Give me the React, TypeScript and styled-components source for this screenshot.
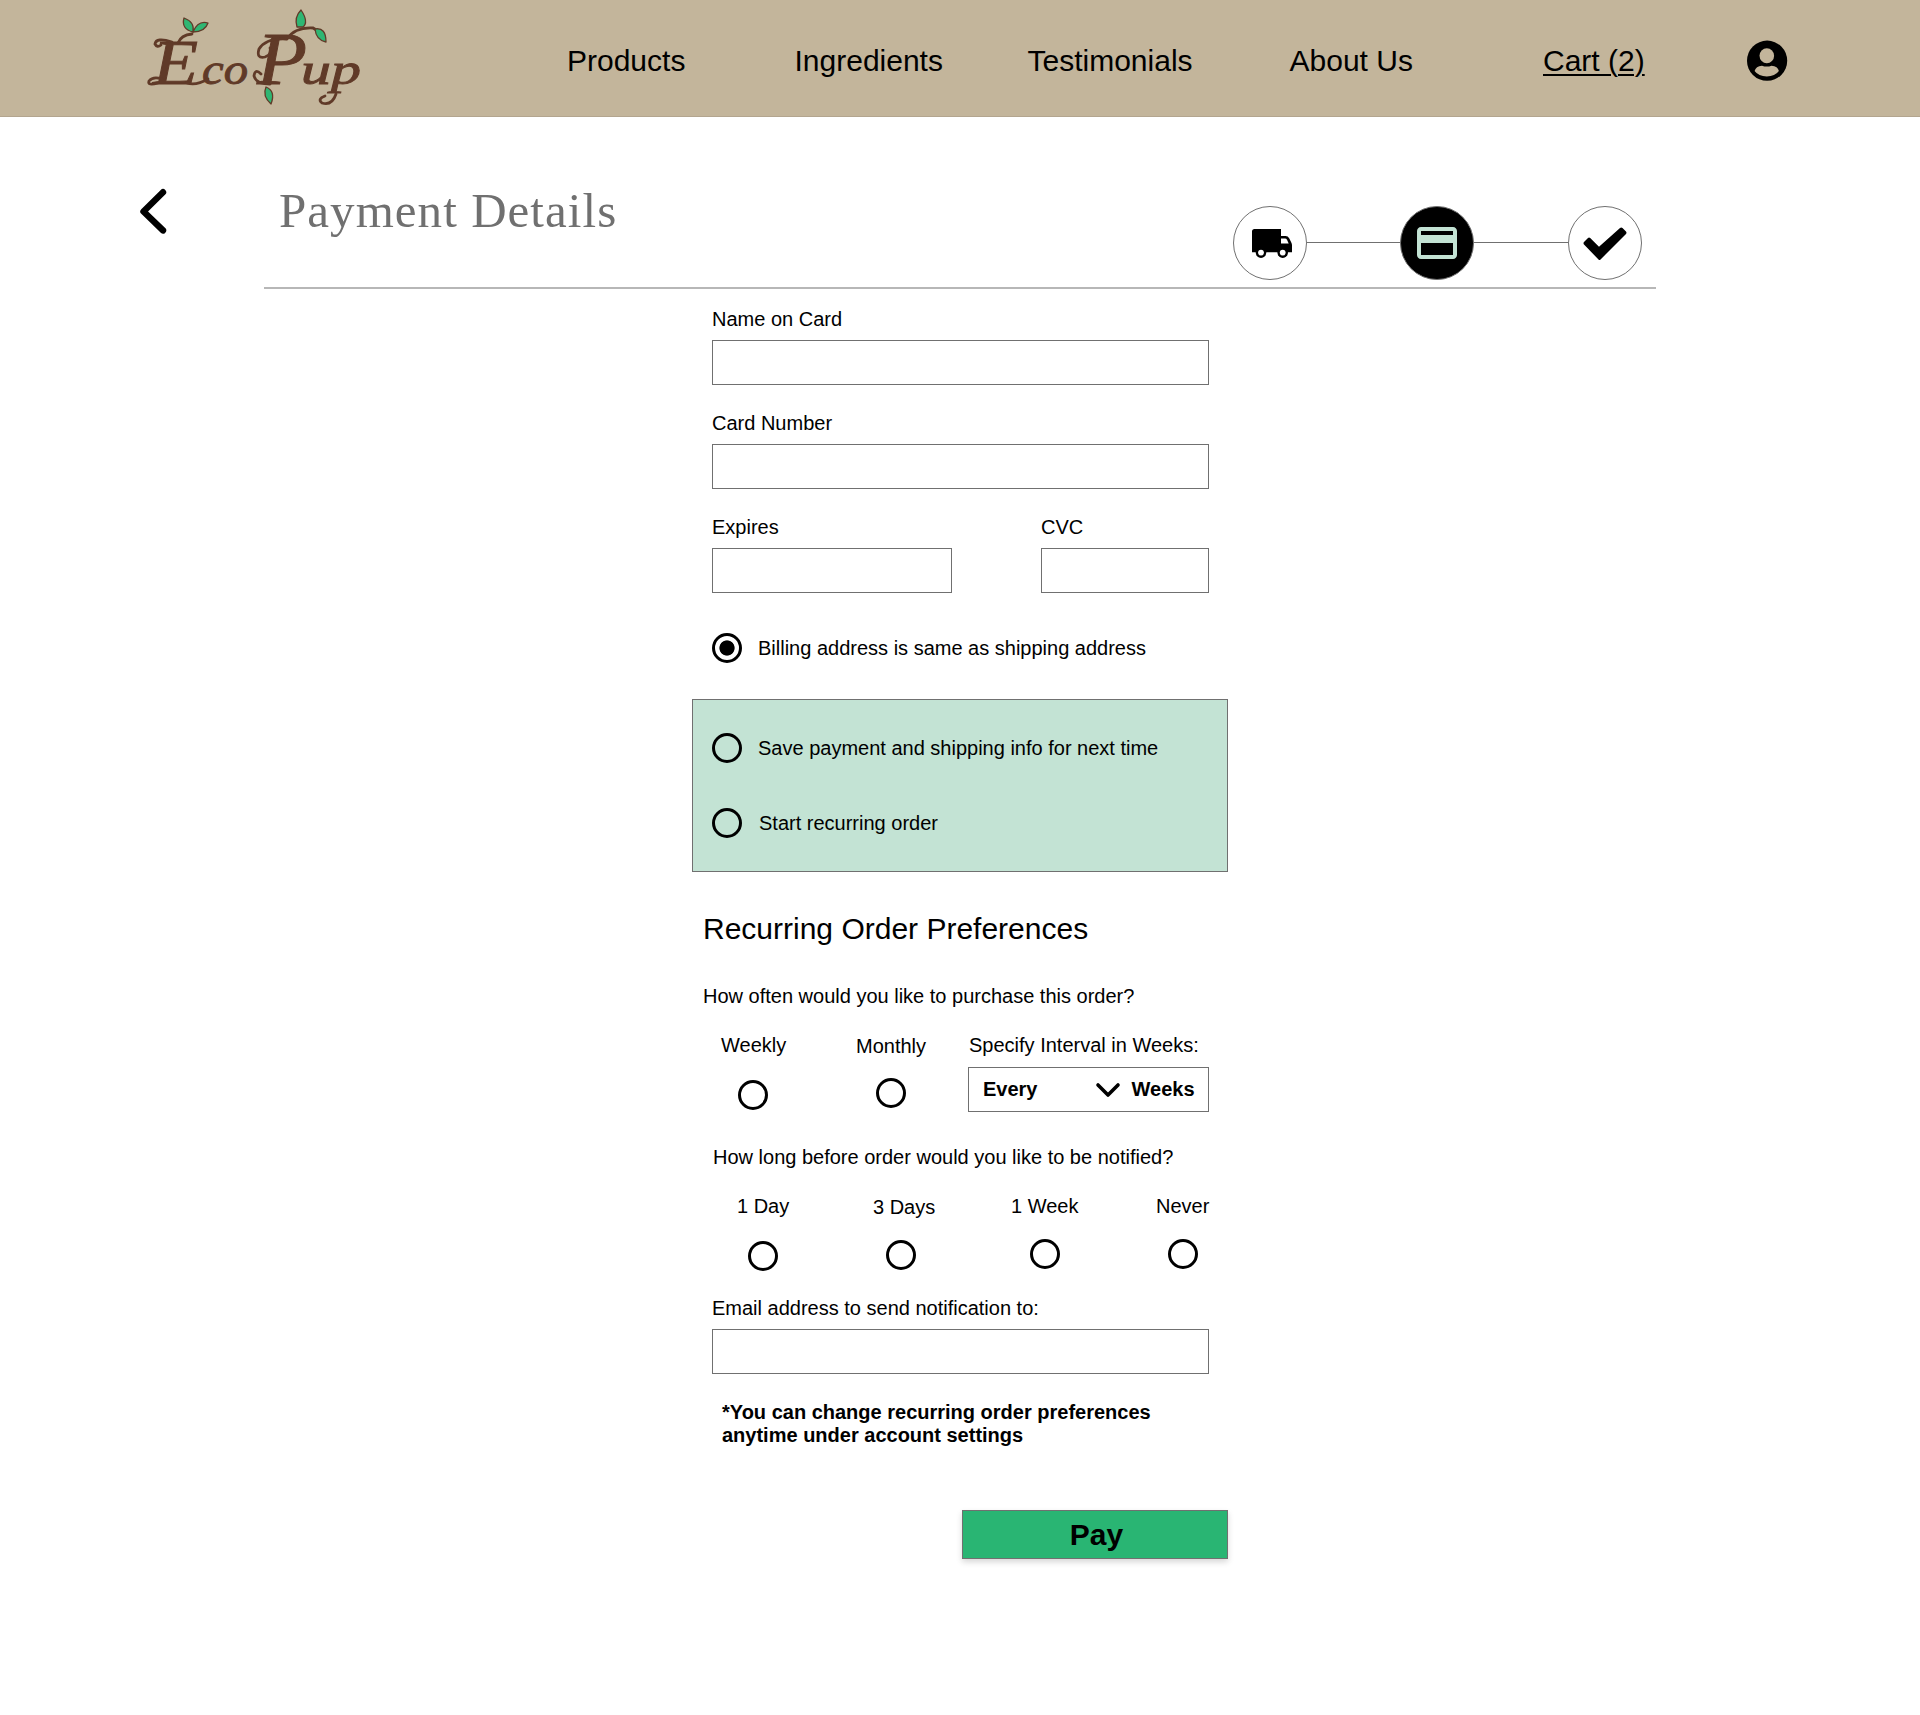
import React, { useState } from 'react';
import styled, { createGlobalStyle } from 'styled-components';
import { MdPayment } from 'react-icons/md';

const GlobalStyle = createGlobalStyle`
  *, *::before, *::after { box-sizing: border-box; }
  body {
    margin: 0;
    background: #fff;
    color: #000;
    font-family: "Liberation Sans", Arial, sans-serif;
    font-size: 20px;
    line-height: 23px;
  }
`;

const Page = styled.div`
  width: 1920px;
  height: 1715px;
`;

const Header = styled.header`
  display: flex;
  align-items: flex-start;
  height: 117px;
  padding-left: 140px;
  background: #c3b59b;
  border-bottom: 1px solid #b3a58f;
`;

const Logo = styled.svg`
  flex: none;
  width: 240px;
  height: 116px;
`;

const Nav = styled.nav`
  display: flex;
  padding: 43px 0 0 187px;
`;

const NavLink = styled.a<{ $width: number; $current?: boolean }>`
  width: ${(p) => p.$width}px;
  font-size: 30px;
  line-height: 36px;
  white-space: nowrap;
  color: #000;
  span {
    text-decoration: ${(p) => (p.$current ? 'underline' : 'none')};
    text-decoration-thickness: 2px;
    text-underline-offset: 3px;
  }
`;

const Account = styled.svg`
  width: 41px;
  height: 41px;
  margin-top: 40px;
`;

const TitleBar = styled.section`
  display: flex;
  height: 172px;
  padding-left: 138px;
`;

const Back = styled.svg`
  width: 30px;
  height: 48px;
  margin-top: 70px;
`;

const TitleRow = styled.div`
  display: flex;
  justify-content: space-between;
  width: 1392px;
  margin-left: 96px;
  padding: 0 14px 0 15px;
  border-bottom: 2px solid #b7b7b7;
`;

const Title = styled.h1`
  margin: 65px 0 0;
  font: 400 49px/58px Baskerville, "Liberation Serif", serif;
  letter-spacing: 1.05px;
  color: #707070;
`;

const Steps = styled.div`
  display: flex;
  align-items: center;
  height: 74px;
  margin-top: 89px;
`;

const Step = styled.div<{ $active?: boolean; $shift?: number }>`
  display: flex;
  align-items: center;
  justify-content: center;
  width: 74px;
  height: 74px;
  padding-left: ${(p) => p.$shift ?? 0}px;
  border: 1px solid #707070;
  border-radius: 50%;
  background: ${(p) => (p.$active ? '#000' : '#fff')};
  color: ${(p) => (p.$active ? '#c3e3d4' : '#000')};
`;

const StepLine = styled.div<{ $width: number }>`
  width: ${(p) => p.$width}px;
  height: 1px;
  margin-bottom: 1px;
  background: #707070;
`;

const Form = styled.form`
  display: flex;
  flex-direction: column;
  width: 536px;
  margin: 19px 0 0 692px;
`;

const FieldRow = styled.div`
  display: flex;
  justify-content: space-between;
  width: 497px;
  margin: 0 0 27px 20px;
`;

const Field = styled.label<{ $width: number }>`
  display: flex;
  flex-direction: column;
  gap: 9px;
  width: ${(p) => p.$width}px;
`;

const Input = styled.input`
  width: 100%;
  height: 45px;
  padding: 0 12px;
  border: 1px solid #707070;
  border-radius: 0;
  background: #fff;
  font: inherit;
`;

const Radio = styled.input.attrs({ type: 'radio' })`
  appearance: none;
  flex: none;
  width: 30px;
  height: 30px;
  margin: 0;
  border: 3px solid #000;
  border-radius: 50%;
  &:checked {
    background: radial-gradient(circle, #000 7.2px, transparent 8px);
  }
`;

const Choice = styled.label<{ $gap?: number }>`
  display: flex;
  align-items: center;
  gap: ${(p) => p.$gap ?? 16}px;
  height: 30px;
`;

const Billing = styled.div`
  margin: 13px 0 36px 20px;
`;

const SavePanel = styled.div`
  display: flex;
  flex-direction: column;
  gap: 45px;
  height: 173px;
  padding: 33px 0 0 19px;
  border: 1px solid #707070;
  background: #c3e3d4;
`;

const SectionTitle = styled.h2`
  margin: 39px 0 0 11px;
  font-size: 30px;
  line-height: 36px;
  font-weight: 400;
`;

const Question = styled.p<{ $top: number; $left: number }>`
  margin: ${(p) => p.$top}px 0 0 ${(p) => p.$left}px;
`;

const Options = styled.div<{ $top: number; $left: number }>`
  display: flex;
  align-items: flex-start;
  margin: ${(p) => p.$top}px 0 0 ${(p) => p.$left}px;
`;

const Option = styled.label<{ $advance: number; $drop?: number; $gap: number; $indent: number }>`
  display: flex;
  flex-direction: column;
  gap: ${(p) => p.$gap}px;
  width: ${(p) => p.$advance}px;
  padding-top: ${(p) => p.$drop ?? 0}px;
  white-space: nowrap;
  input { margin-left: ${(p) => p.$indent}px; }
`;

const Interval = styled.div`
  display: flex;
  flex-direction: column;
  gap: 10px;
  width: 241px;
`;

const IntervalLabel = styled.span`
  padding-left: 1px;
`;

const Select = styled.button`
  display: flex;
  align-items: center;
  width: 241px;
  height: 45px;
  padding: 0 0 0 14px;
  border: 1px solid #707070;
  background: #fff;
  color: #000;
  font: bold 20px/23px "Liberation Sans", Arial, sans-serif;
`;

const Chevron = styled.svg`
  width: 26px;
  height: 18px;
  margin: 0 11px 0 57px;
`;

const EmailRow = styled(FieldRow)`
  margin-top: 26px;
`;

const Note = styled.p`
  width: 450px;
  margin: 0 0 0 30px;
  font-weight: bold;
`;

const PayButton = styled.button`
  align-self: flex-end;
  width: 266px;
  height: 49px;
  margin-top: 63px;
  padding: 0 0 0 3px;
  border: 1px solid #707070;
  background: #29b573;
  box-shadow: 0 3px 6px rgba(0, 0, 0, 0.16);
  color: #000;
  font: bold 30px/36px "Liberation Sans", Arial, sans-serif;
`;

const brown = '#603a28';

function Leaf({ d }: { d: string }) {
  return <path d={d} fill="#2fb673" stroke={brown} strokeWidth="1.3" strokeLinejoin="round" />;
}

function EcoPupLogo() {
  return (
    <Logo viewBox="140 0 240 116" aria-label="EcoPup">
      <g fontFamily="Liberation Serif, serif" fontStyle="italic" fill={brown} stroke={brown} strokeWidth="0.9">
        <text x="153" y="84" fontSize="64" textLength="45" lengthAdjust="spacingAndGlyphs">E</text>
        <text x="202" y="84" fontSize="44" textLength="46" lengthAdjust="spacingAndGlyphs">co</text>
        <text x="257" y="84" fontSize="74" textLength="50" lengthAdjust="spacingAndGlyphs">P</text>
        <text x="301" y="84" fontSize="44" textLength="60" lengthAdjust="spacingAndGlyphs">up</text>
      </g>
      {/* vines curling off the capitals */}
      <g fill="none" stroke={brown} strokeWidth="2.8" strokeLinecap="round">
        <path d="M178 43 Q181 35 192 34" />
        <path d="M172 42 Q156 37 155 44 Q157 48 161 45" />
        <path d="M158 83 Q147 86 149 81 Q153 76 162 79" />
        <path d="M187 83 Q196 86 208 79" />
        <path d="M287 39 Q295 27 313 28 L318 31" />
        <path d="M286 39 Q266 38 259 49 Q256 59 265 57 Q273 54 270 48" />
        <path d="M270 84 Q256 84 254 76 Q255 68 261 74" />
        <path d="M336 94 Q332 106 322 103 Q317 99 325 96" />
      </g>
      <Leaf d="M193 32 Q181 29 184 18 Q195 22 193 32Z" />
      <Leaf d="M193 32 Q198 20 208 23 Q205 32 193 32Z" />
      <Leaf d="M297 27 Q294 17 301 10 Q309 22 303 27Z" />
      <Leaf d="M315 29 Q326 27 326 42 Q316 40 315 29Z" />
      <Leaf d="M266 87 Q276 91 271 104 Q262 96 266 87Z" />
    </Logo>
  );
}

function Truck() {
  return (
    <svg width="40" height="29" viewBox="0 0 40 29">
      <path d="M2.5 0 H29 V7 H33.5 Q36 7 37.2 9.3 L39.4 13.8 Q40 15 40 16.2 V23.3 H0 V2.5 Q0 0 2.5 0Z" />
      <path d="M29 9.6 H33 Q34.4 9.6 35 10.8 L36.7 14.6 H29Z" fill="#fff" />
      <circle cx="9" cy="23.6" r="5.3" />
      <circle cx="30.7" cy="23.6" r="5.3" />
      <circle cx="9" cy="23.6" r="2.9" fill="#fff" />
      <circle cx="30.7" cy="23.6" r="2.9" fill="#fff" />
    </svg>
  );
}

export default function App() {
  const [same, setSame] = useState(true);
  return (
    <Page>
      <GlobalStyle />
      <Header>
        <EcoPupLogo />
        <Nav>
          <NavLink $width={227.5}><span>Products</span></NavLink>
          <NavLink $width={233}><span>Ingredients</span></NavLink>
          <NavLink $width={262}><span>Testimonials</span></NavLink>
          <NavLink $width={253.5}><span>About Us</span></NavLink>
          <NavLink $width={204} $current><span>Cart (2)</span></NavLink>
        </Nav>
        <Account viewBox="0 0 41 41">
          <circle cx="20.1" cy="20.7" r="20.1" />
          <ellipse cx="19.8" cy="15.7" rx="7.3" ry="7.5" fill="#c3b59b" />
          <path d="M7.6 31 Q8.8 26.2 15 25.7 Q19.8 27.4 24.6 25.7 Q30.8 26.2 31.9 31 Q28 36.4 19.8 36.5 Q11.6 36.4 7.6 31Z" fill="#c3b59b" />
        </Account>
      </Header>

      <TitleBar>
        <Back viewBox="0 0 30 48" fill="none" stroke="#000" strokeWidth="6.4" strokeLinecap="round" strokeLinejoin="round">
          <path d="M25 5.2 L5.5 24.5 L25 43.4" />
        </Back>
        <TitleRow>
          <Title>Payment Details</Title>
          <Steps>
            <Step $shift={4}><Truck /></Step>
            <StepLine $width={93} />
            <Step $active><MdPayment size={48} /></Step>
            <StepLine $width={94} />
            <Step>
              <svg width="44" height="34" viewBox="0 0 44 34">
                <path transform="translate(0 1)" d="M1 15 L5 11 Q6 10 7.2 11 L16 19.8 L37 1 Q38.3 0 39.5 1 L43 4.5 Q44 5.8 43 7 L17.5 32.5 Q16.5 33.5 15.5 32.5 L1 17.5 Q0 16.2 1 15Z" />
              </svg>
            </Step>
          </Steps>
        </TitleRow>
      </TitleBar>

      <Form onSubmit={(e) => e.preventDefault()}>
        <FieldRow><Field $width={497}>Name on Card<Input /></Field></FieldRow>
        <FieldRow><Field $width={497}>Card Number<Input /></Field></FieldRow>
        <FieldRow>
          <Field $width={240}>Expires<Input /></Field>
          <Field $width={168}>CVC<Input /></Field>
        </FieldRow>
        <Billing>
          <Choice><Radio checked={same} onChange={() => setSame(true)} />Billing address is same as shipping address</Choice>
        </Billing>
        <SavePanel>
          <Choice><Radio name="save" />Save payment and shipping info for next time</Choice>
          <Choice $gap={17}><Radio name="recurring" />Start recurring order</Choice>
        </SavePanel>

        <SectionTitle>Recurring Order Preferences</SectionTitle>
        <Question $top={38} $left={11}>How often would you like to purchase this order?</Question>
        <Options $top={26} $left={29}>
          <Option $advance={135} $gap={23} $indent={17}>Weekly<Radio name="freq" /></Option>
          <Option $advance={112} $drop={1} $gap={20} $indent={20}>Monthly<Radio name="freq" /></Option>
          <Interval>
            <IntervalLabel>Specify Interval in Weeks:</IntervalLabel>
            <Select type="button">
              Every
              <Chevron viewBox="0 0 26 18" fill="none" stroke="#000" strokeWidth="3.6" strokeLinecap="round" strokeLinejoin="round">
                <path d="M3 4 L13 14 L23 4" />
              </Chevron>
              Weeks
            </Select>
          </Interval>
        </Options>

        <Question $top={34} $left={21}>How long before order would you like to be notified?</Question>
        <Options $top={26} $left={45}>
          <Option $advance={136} $gap={23} $indent={11}>1 Day<Radio name="notify" /></Option>
          <Option $advance={138} $drop={1} $gap={21} $indent={13}>3 Days<Radio name="notify" /></Option>
          <Option $advance={145} $gap={21} $indent={19}>1 Week<Radio name="notify" /></Option>
          <Option $advance={60} $gap={21} $indent={12}>Never<Radio name="notify" /></Option>
        </Options>
        <EmailRow><Field $width={497}>Email address to send notification to:<Input /></Field></EmailRow>
        <Note>*You can change recurring order preferences anytime under account settings</Note>
        <PayButton type="submit">Pay</PayButton>
      </Form>
    </Page>
  );
}
